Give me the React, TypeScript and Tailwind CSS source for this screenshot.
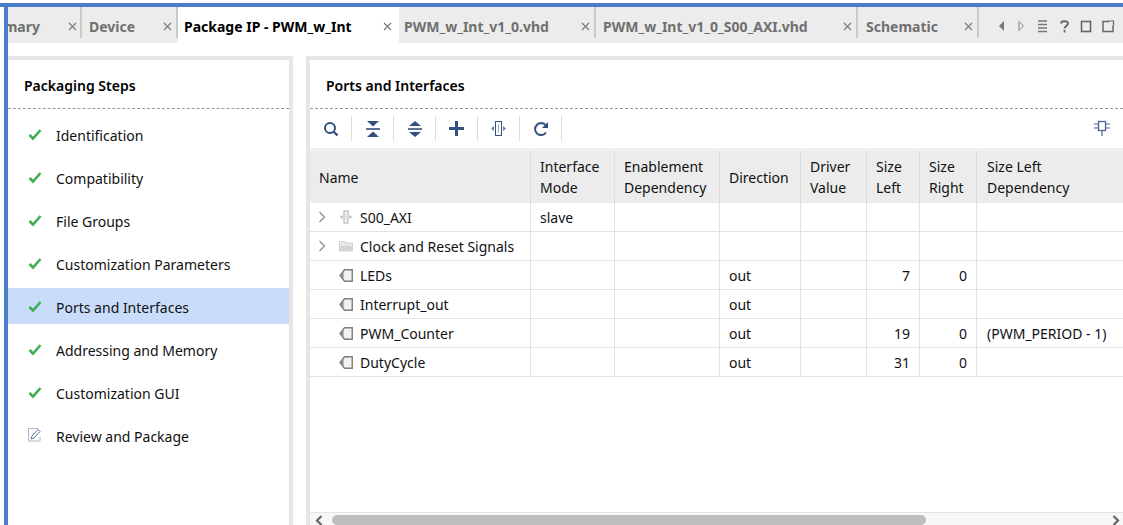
import React from "react";

const steps = [
  "Identification",
  "Compatibility",
  "File Groups",
  "Customization Parameters",
  "Ports and Interfaces",
  "Addressing and Memory",
  "Customization GUI",
  "Review and Package",
];

const cols = "grid grid-cols-[221px_84px_105px_81px_66px_53px_57px_1fr]";

const rows = [
  { name: "S00_AXI", kind: "bus", mode: "slave", dir: "", left: "", right: "", dep: "" },
  { name: "Clock and Reset Signals", kind: "folder", mode: "", dir: "", left: "", right: "", dep: "" },
  { name: "LEDs", kind: "port", mode: "", dir: "out", left: "7", right: "0", dep: "" },
  { name: "Interrupt_out", kind: "port", mode: "", dir: "out", left: "", right: "", dep: "" },
  { name: "PWM_Counter", kind: "port", mode: "", dir: "out", left: "19", right: "0", dep: "(PWM_PERIOD - 1)" },
  { name: "DutyCycle", kind: "port", mode: "", dir: "out", left: "31", right: "0", dep: "" },
];

function Close() {
  return (
    <svg width="9" height="9" viewBox="0 0 9 9" className="shrink-0">
      <path d="M1 1l7 7M8 1l-7 7" stroke="#777" strokeWidth="1.1" fill="none" />
    </svg>
  );
}

function Tab({ label, className }: { label: string; className: string }) {
  return (
    <div className={`${className} shrink-0 flex items-center justify-between font-bold`}>
      <span className="whitespace-nowrap">{label}</span>
      <Close />
    </div>
  );
}

const idleTab = "h-[31px] pt-[7px] text-[#707070] pr-[4.5px] border-r-2 border-[#c9c9c9]";

function Check() {
  return (
    <svg width="14" height="13" viewBox="0 0 14 13" className="shrink-0">
      <path d="M1.5 7l3.5 3.5L12.5 2" stroke="#3fae55" strokeWidth="2.6" fill="none" />
    </svg>
  );
}

function EditIcon() {
  return (
    <svg width="14" height="14" viewBox="0 0 14 14" className="shrink-0">
      <path d="M10 .5H.5v12.500H12V9" stroke="#b4b4bc" fill="none" />
      <path d="M3 11l1-3 6-6.500 2 2-6 6.500z" stroke="#5a6ea8" fill="#fff" strokeWidth="1" />
    </svg>
  );
}

function Sep() {
  return <div className="w-px h-[25px] bg-[#dcdcdc]" />;
}

function ToolBtn({ children }: { children: React.ReactNode }) {
  return <div className="w-[41px] h-[25px] flex items-center justify-center">{children}</div>;
}

function RowIcon({ kind }: { kind: string }) {
  if (kind === "bus")
    return (
      <svg width="14" height="14" viewBox="0 0 14 14">
        <rect x="5" y="1" width="4" height="12" fill="#fff" stroke="#a8a8a8" />
        <path d="M3.500 5v4L1 7zM10.500 5v4L13 7z" fill="#b0b0b0" />
        <path d="M7 3v8" stroke="#d0d0d0" />
      </svg>
    );
  if (kind === "folder")
    return (
      <svg width="14" height="12" viewBox="0 0 14 12">
        <path d="M.5 1.500h5l1 1.500h7v8h-13z" fill="#e9e9e9" stroke="#cfcfcf" />
        <path d="M1 6h12.500v5H1z" fill="#d4d4d4" />
      </svg>
    );
  return (
    <svg width="14" height="13" viewBox="0 0 14 13">
      <path d="M13.250 .75H5.500L1 6.500 5.500 12.250h7.750z" fill="#f1f1f1" stroke="#7f7f7f" strokeWidth="1.400" />
      <path d="M4.500 2.500L1 6.500l3.500 4z" fill="#8a8a8a" />
    </svg>
  );
}

export default function App() {
  return (
    <div className="w-[1123px] h-[525px] overflow-hidden bg-white pt-[3px] pl-[4px] flex flex-col font-['Noto_Sans',sans-serif] text-[14px] text-[#111]">
      <div className="h-[4px] -ml-[4px] shrink-0 bg-[#4a7ccc]" />
      <div className="flex-1 min-h-0 border-l-4 border-[#4a7ccc] flex flex-col">
        {/* tab strip */}
        <div className="h-[36px] shrink-0 bg-[#ececec] flex items-start overflow-hidden">
          <div className={`w-[74px] shrink-0 flex items-center font-bold ${idleTab}`}>
            <div className="w-[60px] overflow-hidden flex justify-end pr-[28px] shrink-0">
              <span className="shrink-0">Summary</span>
            </div>
            <Close />
          </div>
          <Tab label="Device" className={`w-[96px] pl-[7px] ${idleTab}`} />
          <Tab label="Package IP - PWM_w_Int" className="w-[221px] h-full pt-[2px] bg-white text-black pl-[6px] pr-[7.5px]" />
          <Tab label="PWM_w_Int_v1_0.vhd" className={`w-[197px] pl-[5px] ${idleTab}`} />
          <Tab label="PWM_w_Int_v1_0_S00_AXI.vhd" className={`w-[262px] pl-[7px] ${idleTab}`} />
          <Tab label="Schematic" className={`w-[121px] pl-[8px] ${idleTab}`} />
          <div className="flex-1 h-[31px] pt-[7px] flex items-center pl-[19px]">
            <svg width="120" height="16" viewBox="0 0 120 16">
              <path d="M6 3v10L1 8z" fill="#777" />
              <path d="M21 3.500v9l4.500-4.500z" fill="none" stroke="#888" />
              <path d="M40 3h9M40 6.500h9M40 10h9M40 13.500h9" stroke="#777" strokeWidth="1.300" />
              <path d="M63 5.500c0-3 7-3 7 0 0 2.500-3.500 2.500-3.500 5M66.500 12v2.500" stroke="#666" strokeWidth="1.800" fill="none" />
              <rect x="83.500" y="3.500" width="9" height="10" fill="none" stroke="#666" strokeWidth="1.600" />
              <path d="M111 3.500h-6v10h10v-6" fill="none" stroke="#666" strokeWidth="1.500" />
              <path d="M110 3h5.500v4.500" fill="none" stroke="#666" strokeWidth="1.200" />
            </svg>
          </div>
        </div>

        <div className="h-[13px] shrink-0" />

        {/* panels */}
        <div className="flex-1 min-h-0 flex">
          <div className="w-[285px] shrink-0 border-t-4 border-r-4 border-[#e6e6e6] flex flex-col">
            <div className="h-[49px] border-b border-dashed border-[#9a9a9a] pl-[16px] pt-[16px] font-semibold leading-[20px] text-black">
              Packaging Steps
            </div>
            <div className="pt-[7px] flex flex-col gap-[7px]">
              {steps.map((step, i) => (
                <div
                  key={step}
                  className={`h-[36px] flex items-center pl-[20px] pt-[2px] ${
                    step === "Ports and Interfaces" ? "bg-[#c9ddfb]" : ""
                  }`}
                >
                  <div className="w-[28px] -mt-[2px] flex items-center">{i === 7 ? <EditIcon /> : <Check />}</div>
                  <span>{step}</span>
                </div>
              ))}
            </div>
          </div>

          <div className="w-[13px] shrink-0" />

          <div className="flex-1 min-w-0 border-t-4 border-l-4 border-[#e6e6e6] flex flex-col">
            <div className="h-[49px] shrink-0 border-b border-dashed border-[#9a9a9a] pl-[16px] pt-[16px] font-semibold leading-[20px] text-black">
              Ports and Interfaces
            </div>

            {/* toolbar */}
            <div className="h-[39px] shrink-0 flex items-start pt-[7px] justify-between pr-[13px]">
              <div className="flex items-center">
                <ToolBtn>
                  <svg width="16" height="16" viewBox="0 0 16 16">
                    <circle cx="7" cy="7" r="5" fill="none" stroke="#34507f" strokeWidth="2" />
                    <path d="M11 11l3.500 3.500" stroke="#34507f" strokeWidth="2.400" />
                  </svg>
                </ToolBtn>
                <Sep />
                <ToolBtn>
                  <svg width="14" height="16" viewBox="0 0 14 16">
                    <path d="M1 0h12L7 5.500zM1 16h12L7 10.500z" fill="#34507f" />
                    <path d="M0 8h14" stroke="#34507f" strokeWidth="1.600" />
                  </svg>
                </ToolBtn>
                <Sep />
                <ToolBtn>
                  <svg width="14" height="16" viewBox="0 0 14 16">
                    <path d="M1 5L7 0l6 5zM1 11h12l-6 5z" fill="#34507f" />
                    <path d="M0 8h14" stroke="#34507f" strokeWidth="1.600" />
                  </svg>
                </ToolBtn>
                <Sep />
                <ToolBtn>
                  <svg width="15" height="15" viewBox="0 0 15 15">
                    <path d="M7.500 0v15M0 7.500h15" stroke="#34507f" strokeWidth="3" />
                  </svg>
                </ToolBtn>
                <Sep />
                <ToolBtn>
                  <svg width="15" height="15" viewBox="0 0 15 15">
                    <rect x="4.500" y=".5" width="6" height="14" fill="#fff" stroke="#34507f" />
                    <path d="M3 5v5L0 7.500zM12 5v5l3-2.500z" fill="#6d82a8" />
                    <path d="M7.500 3v9" stroke="#9fb0cc" />
                  </svg>
                </ToolBtn>
                <Sep />
                <ToolBtn>
                  <svg width="16" height="16" viewBox="0 0 16 16">
                    <path d="M13 11.500A6 6 0 1 1 12.500 4" fill="none" stroke="#34507f" strokeWidth="2" />
                    <path d="M15 1v6H9z" fill="#34507f" />
                  </svg>
                </ToolBtn>
                <Sep />
              </div>
              <svg width="16" height="16" viewBox="0 0 16 16" className="mt-[4px]">
                <rect x="4.500" y="1.500" width="7" height="9" fill="none" stroke="#4a6390" strokeWidth="1.300" />
                <path d="M0 4h4M0 8h4M12 4h4M12 8h4M8 11v5" stroke="#4a6390" strokeWidth="1.200" />
              </svg>
            </div>

            {/* table */}
            <div className="flex-1 min-h-0 flex flex-col border-t-[3px] border-[#f1f1f1] leading-[21px]">
              <div className={`${cols} h-[52px] shrink-0 bg-[#ececec]`}>
                {[
                  "Name",
                  "Interface Mode",
                  "Enablement Dependency",
                  "Direction",
                  "Driver Value",
                  "Size Left",
                  "Size Right",
                  "Size Left Dependency",
                ].map((h, i) => (
                  <div
                    key={h}
                    className={`flex items-center ${i < 7 ? "pl-[9px] border-r border-[#dcdcdc]" : "pl-[10px]"}`}
                  >
                    <span className={i === 7 ? "w-[100px]" : ""}>{h}</span>
                  </div>
                ))}
              </div>
              <div className="flex-1 min-h-0">
                {rows.map((r) => (
                  <div key={r.name} className={`${cols} h-[29px] border-b border-[#e2e2e2]`}>
                    <div className="border-r border-[#e2e2e2] flex items-center pl-[8px]">
                      <div className="w-[21px] flex items-center">
                        {r.kind !== "port" && (
                          <svg width="8" height="12" viewBox="0 0 8 12">
                            <path d="M1.500 1l5 5-5 5" fill="none" stroke="#8a8a8a" strokeWidth="1.200" />
                          </svg>
                        )}
                      </div>
                      <div className="w-[21px] flex items-center">
                        <RowIcon kind={r.kind} />
                      </div>
                      <span className="whitespace-nowrap">{r.name}</span>
                    </div>
                    <div className="border-r border-[#e2e2e2] flex items-center pl-[9px]">{r.mode}</div>
                    <div className="border-r border-[#e2e2e2]" />
                    <div className="border-r border-[#e2e2e2] flex items-center pl-[9px]">{r.dir}</div>
                    <div className="border-r border-[#e2e2e2]" />
                    <div className="border-r border-[#e2e2e2] flex items-center justify-end pr-[9px]">{r.left}</div>
                    <div className="border-r border-[#e2e2e2] flex items-center justify-end pr-[9px]">{r.right}</div>
                    <div className="flex items-center pl-[10px] whitespace-nowrap">{r.dep}</div>
                  </div>
                ))}
              </div>

              {/* scrollbar */}
              <div className="h-[13px] shrink-0 bg-[#f7f7f7] border-t border-[#e4e4e4] flex items-start pt-[2px] pl-[4px] pr-[2px]">
                <svg width="10" height="11" viewBox="0 0 10 11" className="shrink-0">
                  <path d="M7.500 1L3 5.500 7.500 10" fill="none" stroke="#666" strokeWidth="2.200" />
                </svg>
                <div className="w-[594px] h-[10px] ml-[8px] rounded-full bg-[#bdbdbd] shrink-0" />
                <div className="flex-1" />
                <svg width="10" height="11" viewBox="0 0 10 11" className="shrink-0">
                  <path d="M2.500 1L7 5.500 2.500 10" fill="none" stroke="#666" strokeWidth="2.200" />
                </svg>
              </div>
            </div>
          </div>
        </div>
      </div>
    </div>
  );
}
